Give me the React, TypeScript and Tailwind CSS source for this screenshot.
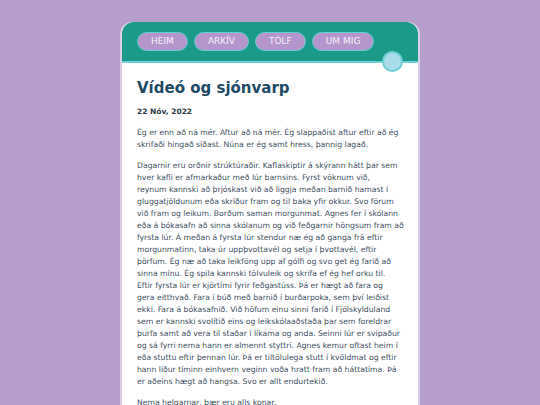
// Line breaks follow the original page's wrapping
const paragraphs: string[][] = [
  [
    "Ég er enn að ná mér. Aftur að ná mér. Ég slappaðist aftur eftir að ég",
    "skrifaði hingað síðast. Núna er ég samt hress, þannig lagað.",
  ],
  [
    "Dagarnir eru orðnir strúktúraðir. Kaflaskiptir á skýrann hátt þar sem",
    "hver kafli er afmarkaður með lúr barnsins. Fyrst vöknum við,",
    "reynum kannski að þrjóskast við að liggja meðan barnið hamast í",
    "gluggatjöldunum eða skríður fram og til baka yfir okkur. Svo förum",
    "við fram og leikum. Borðum saman morgunmat. Agnes fer í skólann",
    "eða á bókasafn að sinna skólanum og við feðgarnir höngsum fram að",
    "fyrsta lúr. Á meðan á fyrsta lúr stendur næ ég að ganga frá eftir",
    "morgunmatinn, taka úr uppþvottavél og setja í þvottavél, eftir",
    "þörfum. Ég næ að taka leikföng upp af gólfi og svo get ég farið að",
    "sinna mínu. Ég spila kannski tölvuleik og skrifa ef ég hef orku til.",
    "Eftir fyrsta lúr er kjörtími fyrir feðgastúss. Þá er hægt að fara og",
    "gera eitthvað. Fara í búð með barnið í burðarpoka, sem því leiðist",
    "ekki. Fara á bókasafnið. Við höfum einu sinni farið í Fjölskylduland",
    "sem er kannski svolítið eins og leikskólaaðstaða þar sem foreldrar",
    "þurfa samt að vera til staðar í líkama og anda. Seinni lúr er svipaður",
    "og sá fyrri nema hann er almennt styttri. Agnes kemur oftast heim í",
    "eða stuttu eftir þennan lúr. Þá er tiltölulega stutt í kvöldmat og eftir",
    "hann líður tíminn einhvern veginn voða hratt fram að háttatíma. Þá",
    "er aðeins hægt að hangsa. Svo er allt endurtekið.",
  ],
  ["Nema helgarnar, þær eru alls konar."],
];

const links = ["Heim", "Arkív", "Tólf", "Um mig"];

export default function App() {
  return (
    <div className="h-screen overflow-hidden bg-[#b59ecb] pt-[22px] font-['DejaVu_Sans',Verdana,sans-serif]">
      <div className="mx-auto w-[296px] min-h-[400px] bg-white rounded-t-[12px] shadow-[2px_0_0_#dccfe6,-2px_0_0_#dccfe6]">
        <header className="relative h-[41px] bg-[#1b9a8a] rounded-t-[12px] border-b-2 border-[#6fd0d4] px-[15px] flex items-center gap-[6px]">
          {links.map((l) => (
            <a
              key={l}
              href="#"
              className="h-[19px] px-[13px] flex items-center rounded-full bg-[#b596cc] border border-[#63cdd0] text-[9px] text-[#f4eef8] uppercase leading-none"
            >
              {l}
            </a>
          ))}
          <span className="absolute right-[15px] bottom-[-11px] w-[21px] h-[21px] rounded-full bg-[#a8dde9] border-2 border-[#72d0d4]" />
        </header>

        <main className="px-[15px] pt-[16px]">
          <h1 className="text-[15px] leading-[18px] font-bold text-[#1f4a66]">Vídeó og sjónvarp</h1>
          <p className="mt-[9px] text-[7.5px] leading-[12px] font-bold text-[#2d3b48]">22 Nóv, 2022</p>
          {paragraphs.map((lines, i) => (
            <p key={i} className="mt-[9px] whitespace-nowrap text-[7.7px] leading-[12px] text-[#3d4f60]">
              {lines.map((line, j) => (
                <span key={j} className="block">
                  {line}
                </span>
              ))}
            </p>
          ))}
        </main>
      </div>
    </div>
  );
}
